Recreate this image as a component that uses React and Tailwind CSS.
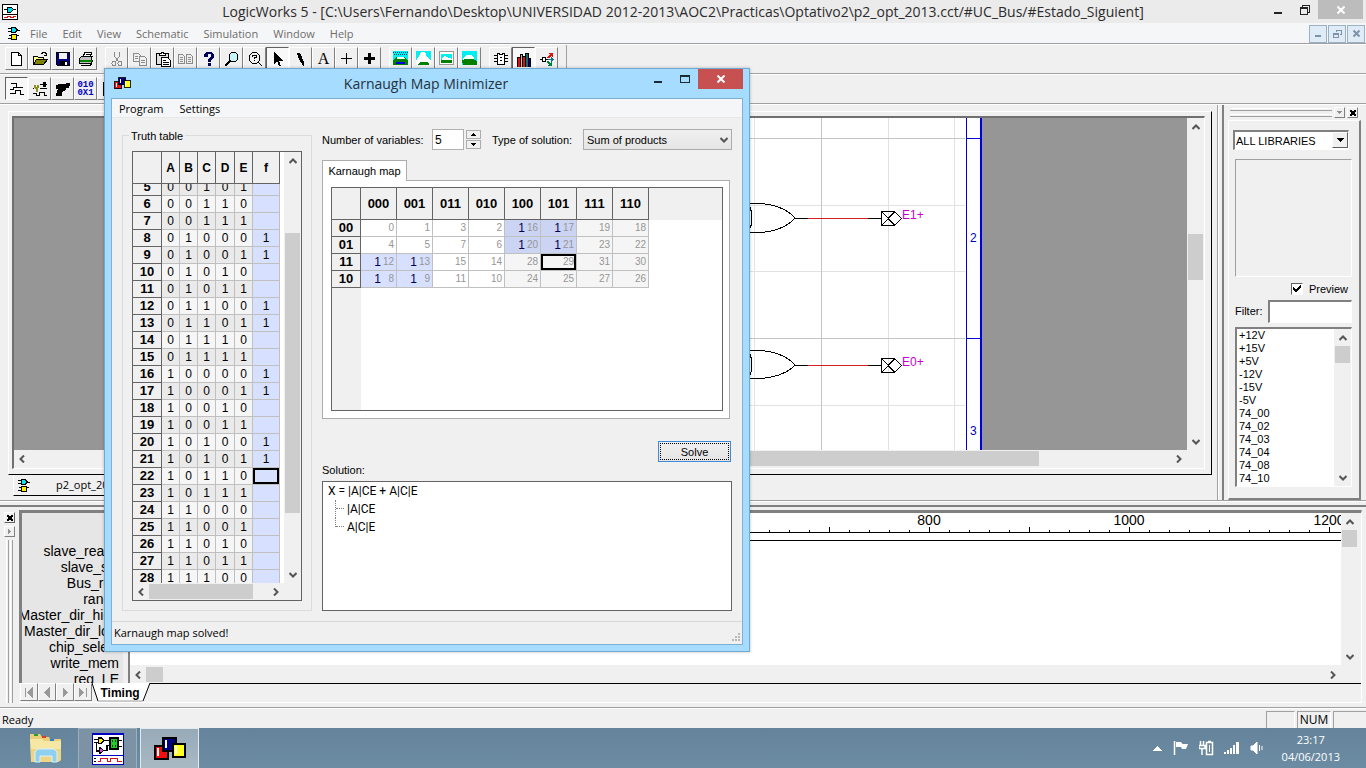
import React from "react";

const UI = "font-['Open_Sans','Noto_Sans',sans-serif]";
const MS = "font-['Liberation_Sans',Arial,sans-serif]";

const TRUTH_ROWS = Array.from({ length: 24 }, (_, i) => i + 5);
const MINTERMS = [8, 9, 12, 13, 16, 17, 20, 21];
const VARS = ["A", "B", "C", "D", "E"];
const VAR_WIDTHS = ["w-[18px]", "w-[18px]", "w-[18px]", "w-[19px]", "w-[18px]"];
const KCOLS = ["000", "001", "011", "010", "100", "101", "111", "110"];
const KROWS = [
  ["00", [0, 1, 3, 2, 16, 17, 19, 18]],
  ["01", [4, 5, 7, 6, 20, 21, 23, 22]],
  ["11", [12, 13, 15, 14, 28, 29, 31, 30]],
  ["10", [8, 9, 11, 10, 24, 25, 27, 26]],
];
const PARTS = ["+12V", "+15V", "+5V", "-12V", "-15V", "-5V", "74_00", "74_02", "74_03", "74_04", "74_08", "74_10"];
const SIGNALS = ["slave_ready", "slave_sel", "Bus_req", "range", "Master_dir_high", "Master_dir_low", "chip_select", "write_mem", "reg_LE"];

function Icon({ size = 16, w, h, children, className = "", vb }) {
  return (
    <svg
      width={w || size}
      height={h || size}
      viewBox={vb || `0 0 ${w || size} ${h || size}`}
      className={`block shrink-0 ${className}`}
      fill="none"
      shapeRendering="crispEdges"
      aria-hidden="true"
    >
      {children}
    </svg>
  );
}

function Chevron({ dir }) {
  const d = {
    up: "M0.5 6 L4 2.5 L7.5 6",
    down: "M0.5 2 L4 5.5 L7.5 2",
    left: "M6 0.5 L2.5 4 L6 7.5",
    right: "M2 0.5 L5.5 4 L2 7.5",
  }[dir];
  return (
    <svg width="8" height="8" viewBox="0 0 8 8" fill="none" stroke="#555" strokeWidth="2" className="block" aria-hidden="true">
      <path d={d} />
    </svg>
  );
}

function VScroll({ className = "", thumb }) {
  return (
    <div className={`flex w-[17px] shrink-0 flex-col items-center bg-[#f0f0f0] ${className}`}>
      <button aria-label="Scroll up" className="flex h-[17px] w-[15px] shrink-0 items-center justify-center"><Chevron dir="up" /></button>
      <div className="flex min-h-0 w-full flex-1 flex-col items-center">
        <div className={`w-[15px] bg-[#cdcdcd] ${thumb}`} />
      </div>
      <button aria-label="Scroll down" className="flex h-[17px] w-[15px] shrink-0 items-center justify-center"><Chevron dir="down" /></button>
    </div>
  );
}

function HScroll({ className = "", thumb }) {
  return (
    <div className={`flex h-[17px] shrink-0 items-center bg-[#f0f0f0] ${className}`}>
      <button aria-label="Scroll left" className="flex h-full w-[16px] shrink-0 items-center justify-center"><Chevron dir="left" /></button>
      <div className="flex h-full min-w-0 flex-1 items-center">
        <div className={`h-[15px] bg-[#cdcdcd] ${thumb}`} />
      </div>
      <button aria-label="Scroll right" className="flex h-full w-[17px] shrink-0 items-center justify-center"><Chevron dir="right" /></button>
    </div>
  );
}

function GateIcon() {
  return (
    <Icon w={14} h={15}>
      <path d="M4 1.500h4l2 2v1l-2 2H4z" fill="#00e5f5" stroke="#000" />
      <path d="M1 2.500h3M1 5.500h3M10 4.500h3M2 9.500h2M10 9.500h2M1 12.500h3" stroke="#000" />
      <path d="M4.500 8.500h5v5h-5z" fill="#ffee00" stroke="#000" />
    </Icon>
  );
}

function Cubes({ w = 17, h = 13 }) {
  return (
    <Icon w={w} h={h} vb="0 0 32 24">
      <rect x="1" y="9" width="13" height="13" fill="#f01010" stroke="#000" strokeWidth="1.6" />
      <rect x="3" y="11" width="2" height="8" fill="#fff" />
      <rect x="9" y="1" width="13" height="13" fill="#000080" stroke="#000" strokeWidth="1.6" />
      <rect x="11" y="3" width="2" height="8" fill="#fff" />
      <rect x="19" y="7" width="12" height="13" fill="#ffff20" stroke="#000" strokeWidth="1.6" />
      <rect x="21" y="9" width="2" height="8" fill="#fff" />
    </Icon>
  );
}

const copyShape = (c, f) => (
  <>
    <path d="M1.500 2.500h5l2 2v6h-7z" fill={f} stroke={c} />
    <path d="M3 5.500h3M3 7.500h3" stroke={c} />
    <path d="M7.500 5.500h5l2 2v7h-7z" fill={f} stroke={c} />
    <path d="M9 9.500h4M9 11.500h4" stroke={c} />
  </>
);

const TOOLS = {
  New: <path d="M2.500 1.500h7l3 3v10h-10zM9.500 1.500v3h3" fill="#fff" stroke="#000" />,
  Open: (
    <>
      <path d="M1.500 13.500v-8h4l1 1h5v3" fill="#ffff90" stroke="#000" />
      <path d="M1.500 13.500l3-5h11l-4 5z" fill="#808000" stroke="#000" />
      <path d="M9 2.500h1l1-1h2l1 1v2M12 4.500h3" stroke="#000" />
    </>
  ),
  Save: (
    <>
      <path d="M1 1h14v14H2l-1-1z" fill="#000" />
      <path d="M2 2h2v6h8V2h2v12H2z" fill="#000080" />
      <rect x="4" y="2" width="8" height="6" fill="#f0f0f0" />
      <rect x="5" y="10" width="7" height="5" fill="#000" />
      <rect x="10" y="11" width="2" height="3" fill="#fff" />
    </>
  ),
  Print: (
    <>
      <path d="M5 6l2-5h7l-2 5z" fill="#fff" stroke="#000" />
      <path d="M8 3.500h4M7 5.500h4" stroke="#000" />
      <path d="M1.500 7.500l2-2h11l-1.500 2v5h-11.500z" fill="#c0c0c0" stroke="#000" />
      <path d="M2 9.500h12" stroke="#008000" strokeWidth="2" />
      <path d="M2 12.500h11l2-3M3 14.500h9l2-2" stroke="#000" />
    </>
  ),
  Cut: (
    <>
      <path d="M5.500 1v4l4 6M10.500 1v4l-4 6" stroke="#8a8a8a" />
      <circle cx="5" cy="12.500" r="2" stroke="#8a8a8a" />
      <circle cx="11" cy="12.500" r="2" stroke="#8a8a8a" />
    </>
  ),
  Copy: copyShape("#8a8a8a", "#f0f0f0"),
  Paste: (
    <>
      <path d="M1.500 2.500h12v11h-12z" fill="#e0e0e0" stroke="#000" />
      <path d="M4.500 4.500v-2h2v-1h2v1h2v2z" fill="#fff" stroke="#000" />
      <path d="M6.500 6.500h6l3 3v6h-9z" fill="#fff" stroke="#000" />
      <path d="M8 9.500h3M8 11.500h6M8 13.500h6" stroke="#000" />
    </>
  ),
  Duplicate: (
    <>
      <path d="M.5 3.500h4l2 2v7h-6zM8.500 3.500h4l2 2v7h-6z" stroke="#8a8a8a" />
      <path d="M2 6.500h3M2 8.500h3M2 10.500h3M10 6.500h3M10 8.500h3M10 10.500h3" stroke="#8a8a8a" />
    </>
  ),
  Help: (
    <>
      <path d="M3 3h1V2h1V1h6v1h1v1h1v4h-1v1h-1v1h-1v2H7V8h1V7h1V6h1V3H7v3H3z" fill="#000060" />
      <rect x="7" y="12" width="3" height="3" fill="#000060" />
    </>
  ),
  Zoom: (
    <>
      <path d="M7 9l-6 6" stroke="#000" strokeWidth="2.500" />
      <circle cx="9.500" cy="6" r="4.500" fill="#c8f4fa" stroke="#000" />
    </>
  ),
  "Context help": (
    <>
      <circle cx="7.500" cy="7" r="5.500" stroke="#000" />
      <path d="M5.500 6V4.500h4v2h-2V8M7 9.500h1M11 11l4 4" stroke="#000" />
    </>
  ),
  Pointer: <path d="M4 1v12l3-3 2 5h2l-2-5h4z" fill="#000" />,
  Draw: <path d="M4 2h3l4 9v4h-1L6 8z" fill="#000" />,
  Wire: <path d="M7.500 2v11M2 7.500h11" stroke="#000" />,
  Bus: <path d="M7.500 2v11M2 7.500h11" stroke="#000" strokeWidth="3" />,
  "Zoom in": (
    <>
      <rect width="15" height="14" fill="#00f0f0" />
      <path d="M0 9l3-3h8l4 3v5H0z" fill="#008000" />
      <path d="M0 1.500h15M1 3.500h13" stroke="#047" strokeDasharray="1 1" />
      <path d="M4 6h6l2 1v1H4z" fill="#fff" />
      <path d="M3 11h9v2H3z" fill="#0000e0" />
    </>
  ),
  "Zoom out": (
    <>
      <rect width="15" height="14" fill="#00f0f0" />
      <path d="M0 10l3-5 2-4h4l2 5 4 4v4H0z" fill="#fff" />
      <path d="M2 13l3-2h6l2 2v1H2z" fill="#008000" />
    </>
  ),
  "Normal size": (
    <>
      <path d="M.5.5h14v13H.5z" fill="#fff" stroke="#999" />
      <rect x="2" y="3" width="11" height="8" fill="#00f0f0" />
      <path d="M3 7l3-2 4 2 3 1v1H3z" fill="#fff" />
      <path d="M2 9h11v3H2z" fill="#008000" />
    </>
  ),
  "Zoom fit": (
    <>
      <rect width="15" height="14" fill="#00f0f0" />
      <path d="M1 7l4-3h4l3 3v2H1z" fill="#fff" />
      <path d="M0 9l3-1h8l4 2v4H1z" fill="#008000" />
    </>
  ),
  Device: (
    <>
      <path d="M4.500 2.500h2v1h3v-1h2v11h-7z" stroke="#000" fill="#fff" />
      <path d="M1 4.500h3M1 7.500h3M1 10.500h3M12 4.500h3M12 7.500h3M12 10.500h3" stroke="#000" />
      <path d="M7 6h2v1H7zM7 9h2v1H7z" fill="#000" />
    </>
  ),
  Libraries: (
    <>
      <path d="M1.500 6.500h3V16h-3z" fill="#e01010" stroke="#000" />
      <path d="M4.500 3.500h2V16h-2z" fill="#f8b060" stroke="#000" />
      <path d="M6.500 5.500h3V16h-3z" fill="#e01010" stroke="#000" />
      <path d="M9.500 2.500h3V16h-3z" fill="#107070" stroke="#000" />
      <path d="M12.500 7.500h2V16h-2z" fill="#0000a0" stroke="#000" />
    </>
  ),
  Hierarchy: (
    <>
      <path d="M1 8.500h2M6 8.500h3" stroke="#000" />
      <path d="M3.500 6.500h3v4h-3z" fill="#fff" stroke="#000" />
      <path d="M8 6h1V5h1V4h1V3h-1V2h4v4h-1V5h-1v1h-1v1H8z" fill="#e01010" />
      <path d="M9 8h3V6l3 2.500-3 2.500V9H9z" fill="#107080" />
      <path d="M8 10h2v1h1v1h1v-1h1v4H9v-1h1v-1H9v-1H8z" fill="#008040" />
    </>
  ),
  Timing: <path d="M2 2.500h5v4h7M1 8.500h3v-2h3M4 8.500v-2M1 12.500h5v-3h5v4h4" stroke="#000" />,
  Probe: (
    <>
      <path d="M8 3.500h3M14 3.500h1" stroke="#000" />
      <path d="M11 1h3v5h-3z" fill="#000" />
      <path d="M2 4h2v2h1V4h2v3H6v4H4V8H3V7H2z" fill="#909020" />
      <path d="M1 7.500h1M8 7.500h7M1 12.500h3v2h3v-3h5v3h3" stroke="#000" />
    </>
  ),
  Trigger: <path d="M1 4h2V3h8V2h4v3h-1v2h-3v2h-1v1H8v1H7v4H1v-3h1V9h1V8H1z" fill="#000" />,
};

function ToolButton({ name, pressed }) {
  return (
    <button
      aria-label={name}
      aria-pressed={pressed ? true : undefined}
      className={`flex h-[23px] w-[23px] shrink-0 items-center justify-center border ${
        pressed
          ? "border-t-[#606060] border-l-[#606060] border-r-white border-b-white bg-[#f8f8f8]"
          : "border-t-white border-l-white border-r-[#808080] border-b-[#808080] bg-[#f0f0f0]"
      }`}
    >
      {name === "Text" ? (
        <span className="font-['Liberation_Serif',serif] text-[16px] leading-4 font-medium">A</span>
      ) : name === "Values" ? (
        <span className="font-['Liberation_Mono',monospace] text-[9px] leading-[8px] font-bold text-[#0000c0]">010<br />0X1</span>
      ) : (
        <Icon>{TOOLS[name]}</Icon>
      )}
    </button>
  );
}

function Toolbars() {
  const groups = [
    ["New", "Open", "Save", "Print"],
    ["Cut", "Copy", "Paste", "Duplicate", "Help", "Zoom", "Context help", "Pointer", "Draw", "Text", "Wire", "Bus"],
    ["Zoom in", "Zoom out", "Normal size", "Zoom fit"],
    ["Device", "Libraries", "Hierarchy"],
  ];
  return (
    <div>
      <div className="flex h-[30px] items-start border-b border-white shadow-[inset_0_-1px_0_#a0a0a0]">
        <div className="flex gap-2 border-r border-[#a0a0a0] pt-[2px] pr-[8px] pb-1 pl-[5px]">
          {groups.map((g) => (
            <div key={g[0]} className="flex">
              {g.map((n) => <ToolButton key={n} name={n} pressed={n === "Pointer" || n === "Libraries"} />)}
            </div>
          ))}
        </div>
      </div>
      <div className="flex h-[30px] items-start border-b border-white pt-[2px] pl-[5px] shadow-[inset_0_-1px_0_#a0a0a0]">
        {["Timing", "Probe", "Trigger", "Values", "New"].map((n) => <ToolButton key={n} name={n} pressed={n === "Timing"} />)}
      </div>
    </div>
  );
}

function TitleBar() {
  return (
    <header className="flex h-[23px] items-center bg-[#ebebeb] pl-[2px]">
      <Icon w={16} h={16}>
        <path d="M.5.5h15v15H.5z" fill="#fff" stroke="#000" />
        <path d="M5 3h4l2 2v1l-2 2H5z" fill="#00d8e8" stroke="#000" />
        <path d="M2 5.500h3M11 5.500h3M1 10.500h14" stroke="#000" />
        <path d="M2 13.500h3v-1h3v1h3v-1h3" stroke="#e01010" />
      </Icon>
      <h1 className={`${UI} min-w-0 flex-1 truncate pl-[84px] text-center text-[14px] leading-5 text-[#2b2b2b]`}>
        LogicWorks 5 - [C:\Users\Fernando\Desktop\UNIVERSIDAD 2012-2013\AOC2\Practicas\Optativo2\p2_opt_2013.cct/#UC_Bus/#Estado_Siguient]
      </h1>
      <div className="flex h-full items-start">
        <button aria-label="Minimize" className="flex h-[19px] w-[27px] items-center justify-center">
          <Icon w={8} h={10}><path d="M0 7h8v2H0z" fill="#222" /></Icon>
        </button>
        <button aria-label="Restore" className="flex h-[19px] w-[27px] items-center justify-center">
          <Icon w={10} h={10}><path d="M2.500 2V.5h7v7H8M.5 3h7v6.500h-7z" stroke="#222" /><path d="M0 3h8" stroke="#222" strokeWidth="2" /></Icon>
        </button>
        <button aria-label="Close" className="mr-[3px] flex h-[19px] w-[45px] items-center justify-center bg-[#bcbcbc]">
          <svg width="8" height="8" viewBox="0 0 8 8" stroke="#fff" strokeWidth="2" aria-hidden="true"><path d="M.5.5l7 7M7.500.5l-7 7" /></svg>
        </button>
      </div>
    </header>
  );
}

function MenuBar() {
  const kids = [
    ["Minimize document", <path key="a" d="M1 6h6v2H1z" fill="#7f93a8" />],
    ["Restore document", <path key="b" d="M3 2.500V1h5v4.500H7M.5 4h5v4h-5zM.5 5h5" stroke="#7f93a8" />],
    ["Close document", <path key="c" d="M1.500 1.500l6 6M7.500 1.500l-6 6" stroke="#7f93a8" strokeWidth="2" shapeRendering="auto" />],
  ];
  return (
    <nav className={`${UI} flex h-[22px] items-center border-b border-white bg-[#f5f6f7] pl-[7px] text-[11px] leading-4 text-[#6d6d6d] shadow-[inset_0_-1px_0_#a0a0a0]`}>
      <GateIcon />
      <div className="flex flex-1 gap-[15px] pl-[9px]">
        {["File", "Edit", "View", "Schematic", "Simulation", "Window", "Help"].map((m) => <button key={m}>{m}</button>)}
      </div>
      <div className="flex gap-px pr-px">
        {kids.map(([l, d]) => (
          <button key={l} aria-label={l} className="flex h-[18px] w-[18px] items-center justify-center border border-[#9db1c5] bg-[#dfebf7]">
            <Icon w={9} h={9}>{d}</Icon>
          </button>
        ))}
      </div>
    </nav>
  );
}

function Output({ y, top, bottom, label }) {
  return (
    <g>
      <path d={`M700 ${y + top} H736 Q768 ${y + top} 781 ${y} Q768 ${y + bottom} 736 ${y + bottom} H700 M734 ${y + top} Q742 ${y} 734 ${y + bottom}`} stroke="#000" fill="none" />
      <rect x="781" y={y} width="86" height="1" fill="#000" />
      <rect x="794" y={y} width="60" height="1" fill="#d02020" />
      <path d={`M867.500 ${y - 6.5}h13l7 7l-7 7h-13zM867.500 ${y - 6.5}l13.500 14M867.500 ${y + 7.5}l13.500 -14`} stroke="#000" fill="none" />
      <text x="888" y={y + 1} fill="#c800c8" fontSize="12">{label}</text>
    </g>
  );
}

function Schematic() {
  return (
    <svg className={`${MS} block h-full w-full bg-[#969696]`} shapeRendering="crispEdges" role="img" aria-label="Schematic sheet">
      <rect x="200" y="0" width="767" height="100%" fill="#fff" />
      <path d="M740.500 0v332M874.500 0v332M940.500 0v332M200 87.500h751M200 153.500h751M200 287.500h751" stroke="#e2e2e2" />
      <path d="M807.500 0v332M200 20.500h751M200 220.500h751" stroke="#c4c4c4" />
      <path d="M952.500 0v332M952 20.500h14M952 220.500h14" stroke="#0000d0" />
      <path d="M967 0v332" stroke="#0000e8" strokeWidth="2" />
      <text x="956" y="124" fill="#0000c0" fontSize="12">2</text>
      <text x="956" y="317" fill="#0000c0" fontSize="12">3</text>
      <Output y={100} top={-15} bottom={15} label="E1+" />
      <Output y={247} top={-15} bottom={14} label="E0+" />
    </svg>
  );
}

function Workspace() {
  return (
    <section className="flex min-w-0 flex-1 flex-col border-r border-[#a0a0a0] pt-[6px]">
      <div className="mr-[5px] ml-[8px] flex min-h-0 flex-1 border border-t-white border-r-black border-b-black border-l-white pt-1 pr-[6px] pb-[5px] pl-[3px]">
        <div className="flex min-w-0 flex-1 flex-col border-t-2 border-r border-b border-l-2 border-t-[#707070] border-r-white border-b-white border-l-[#707070]">
          <div className="flex min-h-0 flex-1">
            <div className="min-w-0 flex-1"><Schematic /></div>
            <VScroll thumb="mt-[99px] h-[46px]" />
          </div>
          <HScroll className="mr-[17px] mb-px" thumb="ml-[200px] w-[809px]" />
        </div>
      </div>
      <div className="flex h-[25px] items-start pl-[13px]">
        <div className={`${UI} flex h-[21px] items-center gap-[25px] border-b border-l border-b-black border-l-white pr-5 pl-[3px] text-[11px]`}>
          <GateIcon />
          <span>p2_opt_2013.cct</span>
        </div>
      </div>
    </section>
  );
}

function LibraryPanel() {
  return (
    <aside className={`${MS} flex w-[148px] shrink-0 flex-col border-l border-white pl-[3px] text-[11px] text-black`}>
      <div className="flex min-h-0 flex-1 flex-col border-l-2 border-[#808080] pr-[5px] pl-[4px]">
        <div className="flex h-[15px] items-center gap-[2px] pr-[3px] pl-[2px]">
          <div className="flex flex-1 flex-col gap-[3px]">
            <div className="h-[3px] border-t border-b border-t-white border-b-[#a0a0a0]" />
            <div className="h-[3px] border-t border-b border-t-white border-b-[#a0a0a0]" />
          </div>
          <button aria-label="Dock menu" className="flex h-[11px] w-[11px] items-center justify-center border border-t-white border-r-[#808080] border-b-[#808080] border-l-white">
            <Icon w={5} h={3}><path d="M0 0h5L2.500 3z" fill="#909090" /></Icon>
          </button>
          <button aria-label="Close panel" className="flex h-[11px] w-[11px] items-center justify-center border border-t-white border-r-[#808080] border-b-[#808080] border-l-white">
            <Icon w={6} h={6}><path d="M0 0l6 6M6 0L0 6" stroke="#000" strokeWidth="1.500" /></Icon>
          </button>
        </div>
        <div className="flex min-h-0 flex-1 flex-col border-t border-r-2 border-b-2 border-l border-t-white border-r-[#808080] border-b-[#808080] border-l-white pt-[9px] pr-[7px] pb-[11px] pl-[4px]">
          <div className="relative mr-[3px]">
            <select aria-label="Library" className="block h-[20px] w-full appearance-none border border-t-2 border-l-2 border-[#808080] border-r-white border-b-white bg-white pl-[1px] text-[11px] leading-4 outline-none">
              <option>ALL LIBRARIES</option>
            </select>
            <span className="pointer-events-none absolute top-[2px] right-px flex h-[16px] w-[16px] items-center justify-center border border-t-white border-r-[#606060] border-b-[#606060] border-l-white bg-[#f0f0f0]">
              <Icon w={7} h={4}><path d="M0 0h7L3.500 4z" fill="#000" /></Icon>
            </span>
          </div>
          <div className="flex min-h-0 flex-1 flex-col pl-[2px]">
            <div className="mt-[9px] h-[118px] border border-t-[#a0a0a0] border-r-white border-b-white border-l-[#a0a0a0]" />
            <label className="mt-[5px] mr-1 flex h-[14px] items-center justify-end gap-[6px]">
              <span className="relative flex">
                <input type="checkbox" defaultChecked className="h-[12px] w-[12px] appearance-none border border-t-[#606060] border-r-white border-b-white border-l-[#606060] bg-white" />
                <Icon w={8} h={8} className="pointer-events-none absolute top-[2px] left-[2px]"><path d="M0 3l3 3 5-5" stroke="#000" strokeWidth="2" /></Icon>
              </span>
              Preview
            </label>
            <div className="mt-[4px] flex h-[23px] items-center gap-[5px]">
              <label htmlFor="filter">Filter:</label>
              <input id="filter" className="h-full min-w-0 flex-1 border border-t-2 border-l-2 border-t-[#808080] border-r-white border-b-white border-l-[#808080] bg-white outline-none" />
            </div>
            <div className="mt-[4px] flex min-h-0 flex-1 border border-t-2 border-l-2 border-t-[#808080] border-r-white border-b-white border-l-[#808080] bg-white">
              <ul className="min-w-0 flex-1 overflow-hidden pl-[2px] leading-[13px]">
                {PARTS.map((p) => <li key={p}>{p}</li>)}
              </ul>
              <VScroll thumb="h-[17px]" />
            </div>
          </div>
        </div>
      </div>
    </aside>
  );
}

function Ruler() {
  const marks = Array.from({ length: 61 }, (_, i) => i * 20 - 1);
  return (
    <svg className={`${MS} block h-[29px] w-full`} shapeRendering="crispEdges" role="img" aria-label="Time scale">
      <path d="M0 19.500h1400M0 27.500h1400" stroke="#000" />
      {marks.map((x, i) => (
        <path key={x} d={`M${x}.5 ${i % 5 === 0 ? 14 : 17}V20`} stroke="#000" />
      ))}
      {[200, 400, 600, 800, 1000, 1200].map((v) => (
        <text key={v} x={v - 1} y="12" fontSize="14" textAnchor="middle" fill="#000">{v}</text>
      ))}
    </svg>
  );
}

function TimingPanel() {
  return (
    <section className="flex h-[207px] shrink-0 flex-col border-t border-[#a0a0a0]">
      <div className="h-[6px] shrink-0 border-t border-b-2 border-t-white border-b-[#808080]" />
      <div className="flex min-h-0 flex-1 pt-[3px] pr-[4px] pb-[4px]">
        <div className="flex w-[19px] shrink-0 flex-col items-center gap-[3px] pt-[2px]">
          <button aria-label="Close timing" className="flex h-[11px] w-[11px] items-center justify-center border border-t-white border-r-[#606060] border-b-[#606060] border-l-white">
            <Icon w={6} h={6}><path d="M0 0l6 6M6 0L0 6" stroke="#000" strokeWidth="1.500" /></Icon>
          </button>
          <button aria-label="Expand timing" className="flex h-[11px] w-[11px] items-center justify-center border border-t-white border-r-[#808080] border-b-[#808080] border-l-white">
            <Icon w={3} h={5}><path d="M0 0v5l3-2.500z" fill="#909090" /></Icon>
          </button>
          <div className="flex flex-1 gap-[1px]">
            <div className="w-[3px] border-r border-l border-r-[#a0a0a0] border-l-white" />
            <div className="w-[3px] border-r border-l border-r-[#a0a0a0] border-l-white" />
          </div>
        </div>
        <div className="flex min-w-0 flex-1 flex-col border-t-[3px] border-r border-b border-t-[#808080] border-r-white border-b-white">
          <div className="flex min-h-0 flex-1 border-l-[3px] border-[#808080]">
            <div className={`${MS} flex w-[101px] shrink-0 flex-col items-end overflow-hidden bg-[#e6e6e6] pt-[30px] pr-[4px] text-[14px] leading-4 text-black`}>
              {SIGNALS.map((s) => <span key={s} className="block shrink-0">{s}</span>)}
            </div>
            <div className="w-[7px] shrink-0 border-r-2 border-[#808080]" />
            <div className="flex min-w-0 flex-1 flex-col">
              <div className="flex min-h-0 flex-1">
                <div className="min-w-0 flex-1 overflow-hidden bg-white"><Ruler /></div>
                <VScroll className="mr-[3px]" thumb="h-[17px]" />
              </div>
              <HScroll className="mt-px mr-[20px]" thumb="w-[17px]" />
            </div>
          </div>
          <div className="flex h-[19px] shrink-0 items-start pl-px">
            {["M2.500 1v9M9 1v9L4.500 5.500z", "M8 1v9L3.500 5.500z", "M4 1v9l4.500-4.500z", "M2 1v9l4.500-4.500zM9 1v9"].map((d, i) => (
              <button key={d} aria-label={["First", "Previous", "Next", "Last"][i]} className="flex h-[18px] w-[18px] items-center justify-center border border-t-white border-r-[#808080] border-b-[#808080] border-l-white">
                <Icon w={12} h={11}><path d={d} fill="#999" stroke="#999" strokeWidth="1" /></Icon>
              </button>
            ))}
            <button className={`${MS} relative flex h-[19px] w-[58px] items-center justify-center pr-[2px] text-[12px] font-bold`}>
              <svg className="absolute inset-0" width="58" height="19" viewBox="0 0 58 19" aria-hidden="true">
                <path d="M0 0l6 18h45l7-18z" fill="#fff" />
                <path d="M0 0l6 18M51 18l7-18" stroke="#000" fill="none" />
                <path d="M6 18h45" stroke="#a0a0a0" />
              </svg>
              <span className="relative">Timing</span>
            </button>
            <div className="flex-1 self-stretch border-t border-black" />
          </div>
        </div>
      </div>
    </section>
  );
}

function TruthTable() {
  const head = "h-[32px] border-r border-b border-[#646464] bg-[#f0f0f0] p-0 text-center text-[12px] font-bold";
  return (
    <fieldset className="relative mt-[17px] mb-[10px] flex w-[190px] shrink-0 flex-col border border-[#dcdcdc] px-[9px] pt-[15px] pb-[9px]">
      <legend className="absolute top-[-8px] left-[6px] bg-[#f0f0f0] px-[2px] text-[11px] leading-4">Truth table</legend>
      <div className="flex min-h-0 flex-1 flex-col overflow-hidden border border-[#646464] bg-white">
        <div className="flex min-h-0 flex-1">
          <div className="min-w-0 flex-1 overflow-hidden">
            <table className="w-[147px] table-fixed border-separate border-spacing-0 text-[12px] leading-4">
              <thead>
                <tr>
                  <th className={`${head} w-[29px]`} aria-label="Row" />
                  {VARS.map((v, i) => <th key={v} className={`${head} ${VAR_WIDTHS[i]}`}>{v}</th>)}
                  <th className={`${head} w-[27px]`}>f</th>
                </tr>
              </thead>
              <tbody>
                {TRUTH_ROWS.map((n) => {
                  const first = n === 5;
                  const box = first ? "flex h-[11px] items-end justify-center overflow-hidden" : "flex h-[16px] items-center justify-center";
                  return (
                    <tr key={n}>
                      <th className="border-r border-b border-[#646464] bg-[#f0f0f0] p-0 text-[13px] font-bold"><div className={box}>{n}</div></th>
                      {VARS.map((v, i) => (
                        <td key={v} className={`border-r border-b border-[#c0c0c0] p-0 ${n % 2 ? "bg-[#eaeaea]" : "bg-[#f6f6f6]"}`}>
                          <div className={box}>{(n >> (4 - i)) & 1}</div>
                        </td>
                      ))}
                      <td className="border-r border-b border-[#c0c0c0] bg-[#d8e0ff] p-0">
                        <div className={`${box} ${n === 22 ? "outline-2 -outline-offset-2 outline-black" : ""}`}>{MINTERMS.includes(n) ? 1 : ""}</div>
                      </td>
                    </tr>
                  );
                })}
              </tbody>
            </table>
          </div>
          <VScroll thumb="mt-[64px] h-[280px]" />
        </div>
        <div className="flex bg-[#f0f0f0]">
          <HScroll className="w-[151px]" thumb="w-[104px]" />
        </div>
      </div>
    </fieldset>
  );
}

function KarnaughGrid() {
  const head = "h-[32px] border-r border-b border-[#646464] bg-[#f0f0f0] p-0 text-[13px] font-bold";
  return (
    <div className="flex flex-1 flex-col border border-[#646464] bg-white">
      <div className="flex">
        <table className="w-[317px] table-fixed border-separate border-spacing-0 leading-4">
          <thead>
            <tr>
              <th className={`${head} w-[29px]`} aria-label="Row" />
              {KCOLS.map((c) => <th key={c} className={`${head} w-[36px]`}>{c}</th>)}
            </tr>
          </thead>
          <tbody>
            {KROWS.map(([label, cells]) => (
              <tr key={label}>
                <th className="border-r border-b border-[#646464] bg-[#f0f0f0] p-0 text-[13px] font-bold">{label}</th>
                {cells.map((n, i) => {
                  const on = MINTERMS.includes(n);
                  const bg = on ? (i > 3 ? "bg-[#ccd4f4]" : "bg-[#d8e0ff]") : i > 3 ? "bg-[#f5f5f5]" : "bg-white";
                  return (
                    <td key={n} className={`border-r border-b border-[#c0c0c0] p-0 ${bg}`}>
                      <div className={`flex h-[16px] items-center justify-end pr-[2px] ${n === 29 ? "outline-2 -outline-offset-2 outline-black" : ""}`}>
                        {on && <span className="text-[12px] text-[#000050]">1</span>}
                        <span className="w-[13px] text-right text-[10px] text-[#969696]">{n}</span>
                      </div>
                    </td>
                  );
                })}
              </tr>
            ))}
          </tbody>
        </table>
        <div className="h-[32px] flex-1 bg-[#f0f0f0]" />
      </div>
      <div className="w-[29px] flex-1 bg-[#f0f0f0]" />
    </div>
  );
}

function Dialog() {
  return (
    <div role="dialog" aria-label="Karnaugh Map Minimizer" className="absolute top-[68px] left-[104px] flex h-[584px] w-[646px] flex-col border border-[#6fa9d2] bg-[#a6dcff] px-[6px] pb-[6px] shadow-[0_0_3px_rgba(0,0,0,0.25)]">
      <div className="flex h-[29px] shrink-0 items-center pl-[3px]">
        <Cubes />
        <h2 className={`${UI} flex-1 pl-[77px] text-center text-[14px] leading-5 text-[#24323c]`}>Karnaugh Map Minimizer</h2>
        <div className="flex h-full items-start">
          <button aria-label="Minimize" className="flex h-[20px] w-[27px] items-center justify-center"><Icon w={8} h={10}><path d="M0 7h8v2H0z" fill="#1a2a33" /></Icon></button>
          <button aria-label="Maximize" className="flex h-[20px] w-[27px] items-center justify-center"><Icon w={10} h={8}><path d="M.5 1h9v6.500h-9z" stroke="#1a2a33" /><path d="M0 1h10" stroke="#1a2a33" strokeWidth="2" /></Icon></button>
          <button aria-label="Close" className="flex h-[20px] w-[45px] items-center justify-center bg-[#c75050]">
            <svg width="8" height="8" viewBox="0 0 8 8" stroke="#fff" strokeWidth="2" aria-hidden="true"><path d="M.5.5l7 7M7.500.5l-7 7" /></svg>
          </button>
        </div>
      </div>
      <div className={`${MS} flex min-h-0 flex-1 flex-col border border-[#7fb0d4] bg-[#f0f0f0] text-[11px] leading-4 text-black`}>
        <nav className={`${UI} flex h-[19px] shrink-0 items-end gap-[16px] border-b border-[#e8e8e8] bg-[#f5f6f7] pl-[7px]`}>
          <button>Program</button>
          <button>Settings</button>
        </nav>
        <div className="flex min-h-0 flex-1 gap-[10px] pr-[10px] pl-[10px]">
          <TruthTable />
          <div className="flex min-w-0 flex-1 flex-col pt-[11px] pb-[10px]">
            <div className="flex h-[21px] shrink-0 items-center">
              <label htmlFor="vars" className="w-[110px]">Number of variables:</label>
              <input id="vars" defaultValue="5" className="h-[21px] w-[32px] border border-[#b0b0b0] bg-white pl-[2px] text-[12px] outline-none" />
              <div className="ml-[2px] flex flex-col gap-px">
                {["M0 3h5L2.500 0z", "M0 0h5L2.500 3z"].map((d, i) => (
                  <button key={d} aria-label={i ? "Decrease" : "Increase"} className="flex h-[9px] w-[15px] items-center justify-center border border-[#acacac] bg-[#f0f0f0]"><Icon w={5} h={3}><path d={d} fill="#000" /></Icon></button>
                ))}
              </div>
              <label htmlFor="kind" className="ml-[11px] w-[91px]">Type of solution:</label>
              <div className="relative flex-1">
                <select id="kind" className="block h-[21px] w-full appearance-none border border-[#acacac] bg-linear-to-b from-[#f0f0f0] to-[#e5e5e5] pl-[3px] text-[11px] outline-none"><option>Sum of products</option></select>
                <span className="pointer-events-none absolute top-[7px] right-[4px]"><Chevron dir="down" /></span>
              </div>
            </div>
            <div role="tablist" className="mt-[10px] flex shrink-0">
              <button role="tab" aria-selected="true" className="relative -mb-px h-[21px] w-[85px] border border-b-0 border-[#acacac] bg-white text-[11px]">Karnaugh map</button>
            </div>
            <div className="mr-[2px] flex h-[239px] shrink-0 border border-[#acacac] bg-white pt-[6px] pr-[6px] pb-[7px] pl-[8px]">
              <KarnaughGrid />
            </div>
            <button className="mt-[22px] mr-px h-[21px] w-[73px] shrink-0 self-end border border-[#3c8ad8] bg-linear-to-b from-[#f0f0f0] to-[#e5e5e5] p-px">
              <span className="flex h-full items-center justify-center border border-dotted border-black">Solve</span>
            </button>
            <div className="h-[19px] shrink-0">Solution:</div>
            <div className="flex-1 border border-[#646464] bg-white pl-[5px] font-['Roboto','Open_Sans',sans-serif] text-[12px] leading-[18px]">
              <div>X = |A|CE + A|C|E</div>
              <ul className="pl-[7px]">
                {["|A|CE", "A|C|E"].map((t, i) => (
                  <li key={t} className="flex h-[18px]">
                    <span className={`mr-[3px] w-[9px] border-l border-dotted border-[#808080] ${i ? "h-[9px]" : "h-[18px]"}`}>
                      <span className={`block h-[9px] border-dotted border-[#808080] border-b`} />
                    </span>
                    {t}
                  </li>
                ))}
              </ul>
            </div>
          </div>
        </div>
        <div className={`${UI} flex h-[23px] shrink-0 items-center justify-between border-t border-[#d7d7d7] pr-[1px] pl-[2px]`}>
          <span>Karnaugh map solved!</span>
          <Icon w={9} h={9} className="mt-[8px]"><path d="M6 0h2v2H6zM3 3h2v2H3zM6 3h2v2H6zM0 6h2v2H0zM3 6h2v2H3zM6 6h2v2H6z" fill="#b8b8b8" /></Icon>
        </div>
      </div>
    </div>
  );
}

function StatusBar() {
  return (
    <footer className={`${UI} flex h-[21px] shrink-0 items-end justify-between border-t border-[#a0a0a0] bg-[#f0f0f0] text-[12px] leading-4 text-black shadow-[inset_0_1px_0_#fff]`}>
      <span className="pl-[2px] text-[11px]">Ready</span>
      <div className="flex gap-[2px]">
        <span className="h-[17px] w-[29px] border-t border-r border-l border-t-[#a0a0a0] border-r-white border-l-[#a0a0a0]" />
        <span className="h-[17px] w-[34px] border-t border-r border-l border-t-[#a0a0a0] border-r-white border-l-[#a0a0a0] text-center">NUM</span>
        <span className="h-[17px] w-[33px] border-t border-l border-[#a0a0a0]" />
      </div>
    </footer>
  );
}

function Taskbar() {
  return (
    <footer className="flex h-[40px] shrink-0 items-stretch bg-linear-to-b from-[#65849b] to-[#6c8ca4] pl-[14px]">
      <div className="flex gap-[3px]">
        <button aria-label="File Explorer" className="flex w-[61px] items-center justify-center pl-[3px]">
          <svg width="34" height="32" viewBox="0 0 34 32" aria-hidden="true">
            <path d="M1 6V2h10l2 3h7l1 2h11v4H1z" fill="#e9cf78" />
            <rect x="5" y="2" width="4" height="2" fill="#25a03a" />
            <rect x="13" y="4" width="4" height="2" fill="#d84020" />
            <rect x="21" y="7" width="4" height="2" fill="#2a80d0" />
            <path d="M1 7h12l2 2h17v19l-3 2H2z" fill="#f6e7a4" />
            <path d="M2 17h30v11l-3 2H2z" fill="#eed584" />
            <path d="M6 30V20l3-3h16l3 3v10h-5v-6H11v6z" fill="#8fd0ee" stroke="#d8f2fc" />
          </svg>
        </button>
        <button aria-label="LogicWorks" className="flex w-[59px] items-center justify-center border border-b-0 border-[#9bb0bf] bg-[#7b93a4]">
          <Icon size={32}>
            <path d="M.5.5h31v31H.5z" fill="#fff" stroke="#0000c0" />
            <path d="M1 1.500h30M1 22.500h30" stroke="#0000c0" />
            <path d="M6.500 5h3l2.500 2.500-2.500 3h-3z" fill="#ffee00" stroke="#000" strokeWidth="1.500" />
            <path d="M18 5h8v11h-8z" fill="#20d020" stroke="#000" strokeWidth="1.500" />
            <path d="M20 7h1v2h-1zM23 7h1v2h-1zM20 12h1v2h-1zM23 12h1v2h-1z" fill="#004000" />
            <path d="M7 14l5 3.500-5 3.500z" fill="#e040e0" stroke="#000" />
            <path d="M2 6.500h4M2 9.500h4M12 7.500h6M4.500 10v8h3M12 17.500h3v-5h3M26 7.500h4M26 13.500h4" stroke="#000" strokeWidth="1.500" />
            <path d="M6 28.500h2v-3h7v3h3v-3h7v3h5" stroke="#e01010" />
            <path d="M2 25h2v1H2zM2 28h2v1H2z" fill="#000" />
          </Icon>
        </button>
        <button aria-label="Karnaugh Map Minimizer" className="flex w-[59px] items-center justify-center border border-b-0 border-[#e3eaef] bg-linear-to-b from-[#97aab8] to-[#a9b9c4]">
          <Cubes w={32} h={24} />
        </button>
      </div>
      <div className="flex flex-1 items-center justify-end gap-[10px] pr-[26px]">
        <Icon w={9} h={5}><path d="M0 5L4.500 0 9 5z" fill="#fff" /></Icon>
        <svg width="17" height="16" viewBox="0 0 17 16" fill="none" stroke="#fff" aria-hidden="true"><path d="M2.500 1v14" strokeWidth="1.500" /><path d="M4 2h5l1.500 2H16l-2 5h-4L9 7H4z" fill="#fff" stroke="none" /></svg>
        <svg width="15" height="16" viewBox="0 0 15 16" fill="none" stroke="#fff" aria-hidden="true"><path d="M1.500 1v4M4.500 1v4M0 5.500h6v3H0zM3 8v7M7.500 2.500h6v12h-6zM9 1.500h3" strokeWidth="1.500" /><path d="M10 5h1v7h-1z" fill="#fff" stroke="none" /></svg>
        <svg width="16" height="14" viewBox="0 0 16 14" fill="#fff" aria-hidden="true"><path d="M0 11h2v2H0zM3 9h2v4H3zM6 7h2v6H6zM9 4h2v9H9zM12 1h3v12h-3z" /></svg>
        <svg width="14" height="14" viewBox="0 0 14 14" fill="none" stroke="#fff" aria-hidden="true"><path d="M1 5h2l4-4v12L3 9H1z" fill="#fff" /><path d="M9.500 4v6M12 5v4" /></svg>
        <div className={`${UI} ml-[8px] text-center text-[11px] leading-[17px] text-white`}>23:17<br />04/06/2013</div>
      </div>
    </footer>
  );
}

export default function App() {
  return (
    <div className="relative flex h-screen min-h-[700px] flex-col overflow-hidden bg-[#f0f0f0]">
      <TitleBar />
      <MenuBar />
      <Toolbars />
      <main className="flex min-h-0 flex-1">
        <Workspace />
        <LibraryPanel />
      </main>
      <TimingPanel />
      <StatusBar />
      <Taskbar />
      <Dialog />
    </div>
  );
}
